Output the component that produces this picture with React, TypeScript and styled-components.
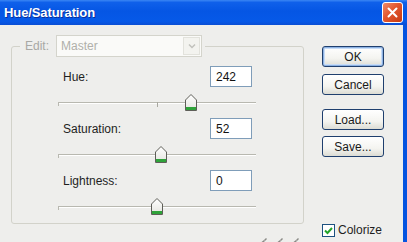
import styled, { createGlobalStyle } from "styled-components";

const GlobalStyle = createGlobalStyle`
  html, body {
    margin: 0;
    padding: 0;
    background: #eeeeec;
  }
  body {
    font-family: "Liberation Sans", Arial, sans-serif;
    font-size: 12px;
    color: #1e1e1e;
  }
`;

const Window = styled.div`
  width: 407px;
  height: 242px;
  overflow: hidden;
  display: flex;
  flex-direction: column;
`;

const TitleBar = styled.div`
  height: 25px;
  flex-shrink: 0;
  display: flex;
  align-items: center;
  justify-content: space-between;
  padding: 0 4px 0 4px;
  background: linear-gradient(
    to bottom,
    #3a86f4 0%,
    #0f60ea 10%,
    #0556e4 45%,
    #0659e8 85%,
    #0a4ed4 100%
  );
`;

const Title = styled.span`
  color: #fff;
  font-weight: bold;
  font-size: 13px;
  letter-spacing: -0.1px;
  text-shadow: 1px 1px 0 #0a2f9a;
`;

const CloseButton = styled.div`
  width: 19px;
  height: 19px;
  border: 1px solid #fff;
  border-radius: 3px;
  display: flex;
  align-items: center;
  justify-content: center;
  background: linear-gradient(135deg, #f08a6a 0%, #e2562e 45%, #c73a12 100%);
`;

const Body = styled.div`
  flex: 1;
  display: flex;
  background: #eeeeec;
  border-right: 4px solid #0553e0;
  padding: 10px 0 0 11px;
`;

const LeftColumn = styled.div`
  width: 293px;
  display: flex;
  flex-direction: column;
`;

const GroupBox = styled.fieldset`
  margin: 0;
  padding: 0 0 1px 0;
  border: 1px solid #d2d2ca;
  border-radius: 3px;
  min-width: 0;
`;

const Legend = styled.legend`
  margin-left: 8px;
  padding: 0 3px 0 5px;
  display: flex;
  align-items: center;
  gap: 7px;
`;

const LegendLabel = styled.span`
  color: #a8a8a4;
`;

const Dropdown = styled.div`
  width: 146px;
  height: 22px;
  box-sizing: border-box;
  border: 1px solid #d4d4cc;
  background: #fafaf8;
  display: flex;
  align-items: center;
  justify-content: space-between;
  padding: 1px 1px 1px 4px;
  color: #b0b0aa;
`;

const DropButton = styled.div`
  width: 17px;
  height: 18px;
  box-sizing: border-box;
  border: 1px solid #e2e2dc;
  background: #f3f3ef;
  display: flex;
  align-items: center;
  justify-content: center;
`;

const Controls = styled.div`
  padding: 9px 0 0 46px;
  display: flex;
  flex-direction: column;
`;

const Control = styled.div`
  display: flex;
  flex-direction: column;
  width: 198px;
`;

const ControlRow = styled.div`
  height: 21px;
  width: 194px;
  display: flex;
  align-items: center;
  justify-content: space-between;
  padding-left: 5px;
  box-sizing: border-box;
`;

const ValueBox = styled.div`
  width: 42px;
  height: 21px;
  box-sizing: border-box;
  border: 1px solid #7f9db9;
  background: #fff;
  display: flex;
  align-items: center;
  padding-left: 5px;
  color: #111;
`;

const Slider = styled.div`
  position: relative;
  height: 31px;
  width: 198px;
`;

const Track = styled.div`
  position: absolute;
  left: 0;
  right: 0;
  top: 15px;
  height: 1px;
  background: #b8b8b0;
  border-bottom: 1px solid #fff;
  &::before {
    content: "";
    position: absolute;
    left: 0;
    top: 0;
    width: 1px;
    height: 4px;
    background: #b8b8b0;
  }
`;

const CenterTick = styled.div`
  position: absolute;
  left: 50%;
  top: 15px;
  width: 1px;
  height: 5px;
  background: #a8a8a0;
`;

const Thumb = styled.svg`
  position: absolute;
  top: 7px;
  margin-left: -6px;
`;

const IconRow = styled.div`
  display: flex;
  justify-content: flex-end;
  gap: 3px;
  padding-right: 4px;
  margin-top: 13px;
`;

const RightColumn = styled.div`
  margin-left: 18px;
  padding-top: 11px;
  display: flex;
  flex-direction: column;
`;

const Button = styled.div<{ $default?: boolean; $gap?: number }>`
  width: 62px;
  height: 21px;
  box-sizing: border-box;
  margin-top: ${(p) => p.$gap ?? 0}px;
  border: 1px solid #1f3f6e;
  border-radius: 3px;
  background: linear-gradient(to bottom, #ffffff 0%, #f4f4f0 60%, #dcdcd4 100%);
  box-shadow: ${(p) =>
    p.$default ? "inset 0 0 0 1px #8db2e3, inset 0 0 0 2px #c8dcf6" : "none"};
  display: flex;
  align-items: center;
  justify-content: center;
  color: #1a1a1a;
`;

const CheckRow = styled.div`
  margin-top: 66px;
  display: flex;
  align-items: center;
  gap: 3px;
`;

const CheckBox = styled.div`
  width: 13px;
  height: 13px;
  box-sizing: border-box;
  border: 1px solid #1c5180;
  background: #fff;
  display: flex;
  align-items: center;
  justify-content: center;
`;

const controls = [
  { label: "Hue:", value: 242, min: 0, max: 360, tick: true },
  { label: "Saturation:", value: 52, min: 0, max: 100, tick: false },
  { label: "Lightness:", value: 0, min: -100, max: 100, tick: false },
];

function SliderThumb({ pos }: { pos: number }) {
  return (
    <Thumb width="12" height="17" viewBox="0 0 12 17" style={{ left: `${pos * 100}%` }}>
      <defs>
        <linearGradient id="thumbFill" x1="0" y1="0" x2="0" y2="1">
          <stop offset="0" stopColor="#ffffff" />
          <stop offset="1" stopColor="#e4e4de" />
        </linearGradient>
      </defs>
      <path d="M6 0.5 L11.5 6 V16.5 H0.5 V6 Z" fill="url(#thumbFill)" stroke="#5e5e58" />
      <rect x="1" y="13" width="10" height="3" fill="#2fa33a" />
    </Thumb>
  );
}

function Eyedropper() {
  return (
    <svg width="13" height="8" viewBox="0 0 13 8">
      <path d="M9 3 L11 1 L12 2 L10 4 Z" fill="#8a8a86" />
      <path d="M9.5 3.5 L4 8" stroke="#8a8a86" strokeWidth="1.5" />
    </svg>
  );
}

export default function App() {
  return (
    <>
      <GlobalStyle />
      <Window>
        <TitleBar>
          <Title>Hue/Saturation</Title>
          <CloseButton>
            <svg width="11" height="11" viewBox="0 0 11 11">
              <path d="M1.5 1.5 L9.5 9.5 M9.5 1.5 L1.5 9.5" stroke="#fff" strokeWidth="2" strokeLinecap="round" />
            </svg>
          </CloseButton>
        </TitleBar>
        <Body>
          <LeftColumn>
            <GroupBox>
              <Legend>
                <LegendLabel>Edit:</LegendLabel>
                <Dropdown>
                  Master
                  <DropButton>
                    <svg width="8" height="6" viewBox="0 0 8 6">
                      <path d="M1 1.5 L4 4.5 L7 1.5" fill="none" stroke="#c2c2bc" strokeWidth="1.5" />
                    </svg>
                  </DropButton>
                </Dropdown>
              </Legend>
              <Controls>
                {controls.map((c) => (
                  <Control key={c.label}>
                    <ControlRow>
                      <span>{c.label}</span>
                      <ValueBox>{c.value}</ValueBox>
                    </ControlRow>
                    <Slider>
                      <Track />
                      {c.tick && <CenterTick />}
                      <SliderThumb pos={(c.value - c.min) / (c.max - c.min)} />
                    </Slider>
                  </Control>
                ))}
              </Controls>
            </GroupBox>
            <IconRow>
              <Eyedropper />
              <Eyedropper />
              <Eyedropper />
            </IconRow>
          </LeftColumn>
          <RightColumn>
            <Button $default>OK</Button>
            <Button $gap={7}>Cancel</Button>
            <Button $gap={14}>Load...</Button>
            <Button $gap={6}>Save...</Button>
            <CheckRow>
              <CheckBox>
                <svg width="9" height="9" viewBox="0 0 9 9">
                  <path d="M1 4.5 L3.5 7 L8 2" fill="none" stroke="#22a329" strokeWidth="2" />
                </svg>
              </CheckBox>
              <span>Colorize</span>
            </CheckRow>
          </RightColumn>
        </Body>
      </Window>
    </>
  );
}
